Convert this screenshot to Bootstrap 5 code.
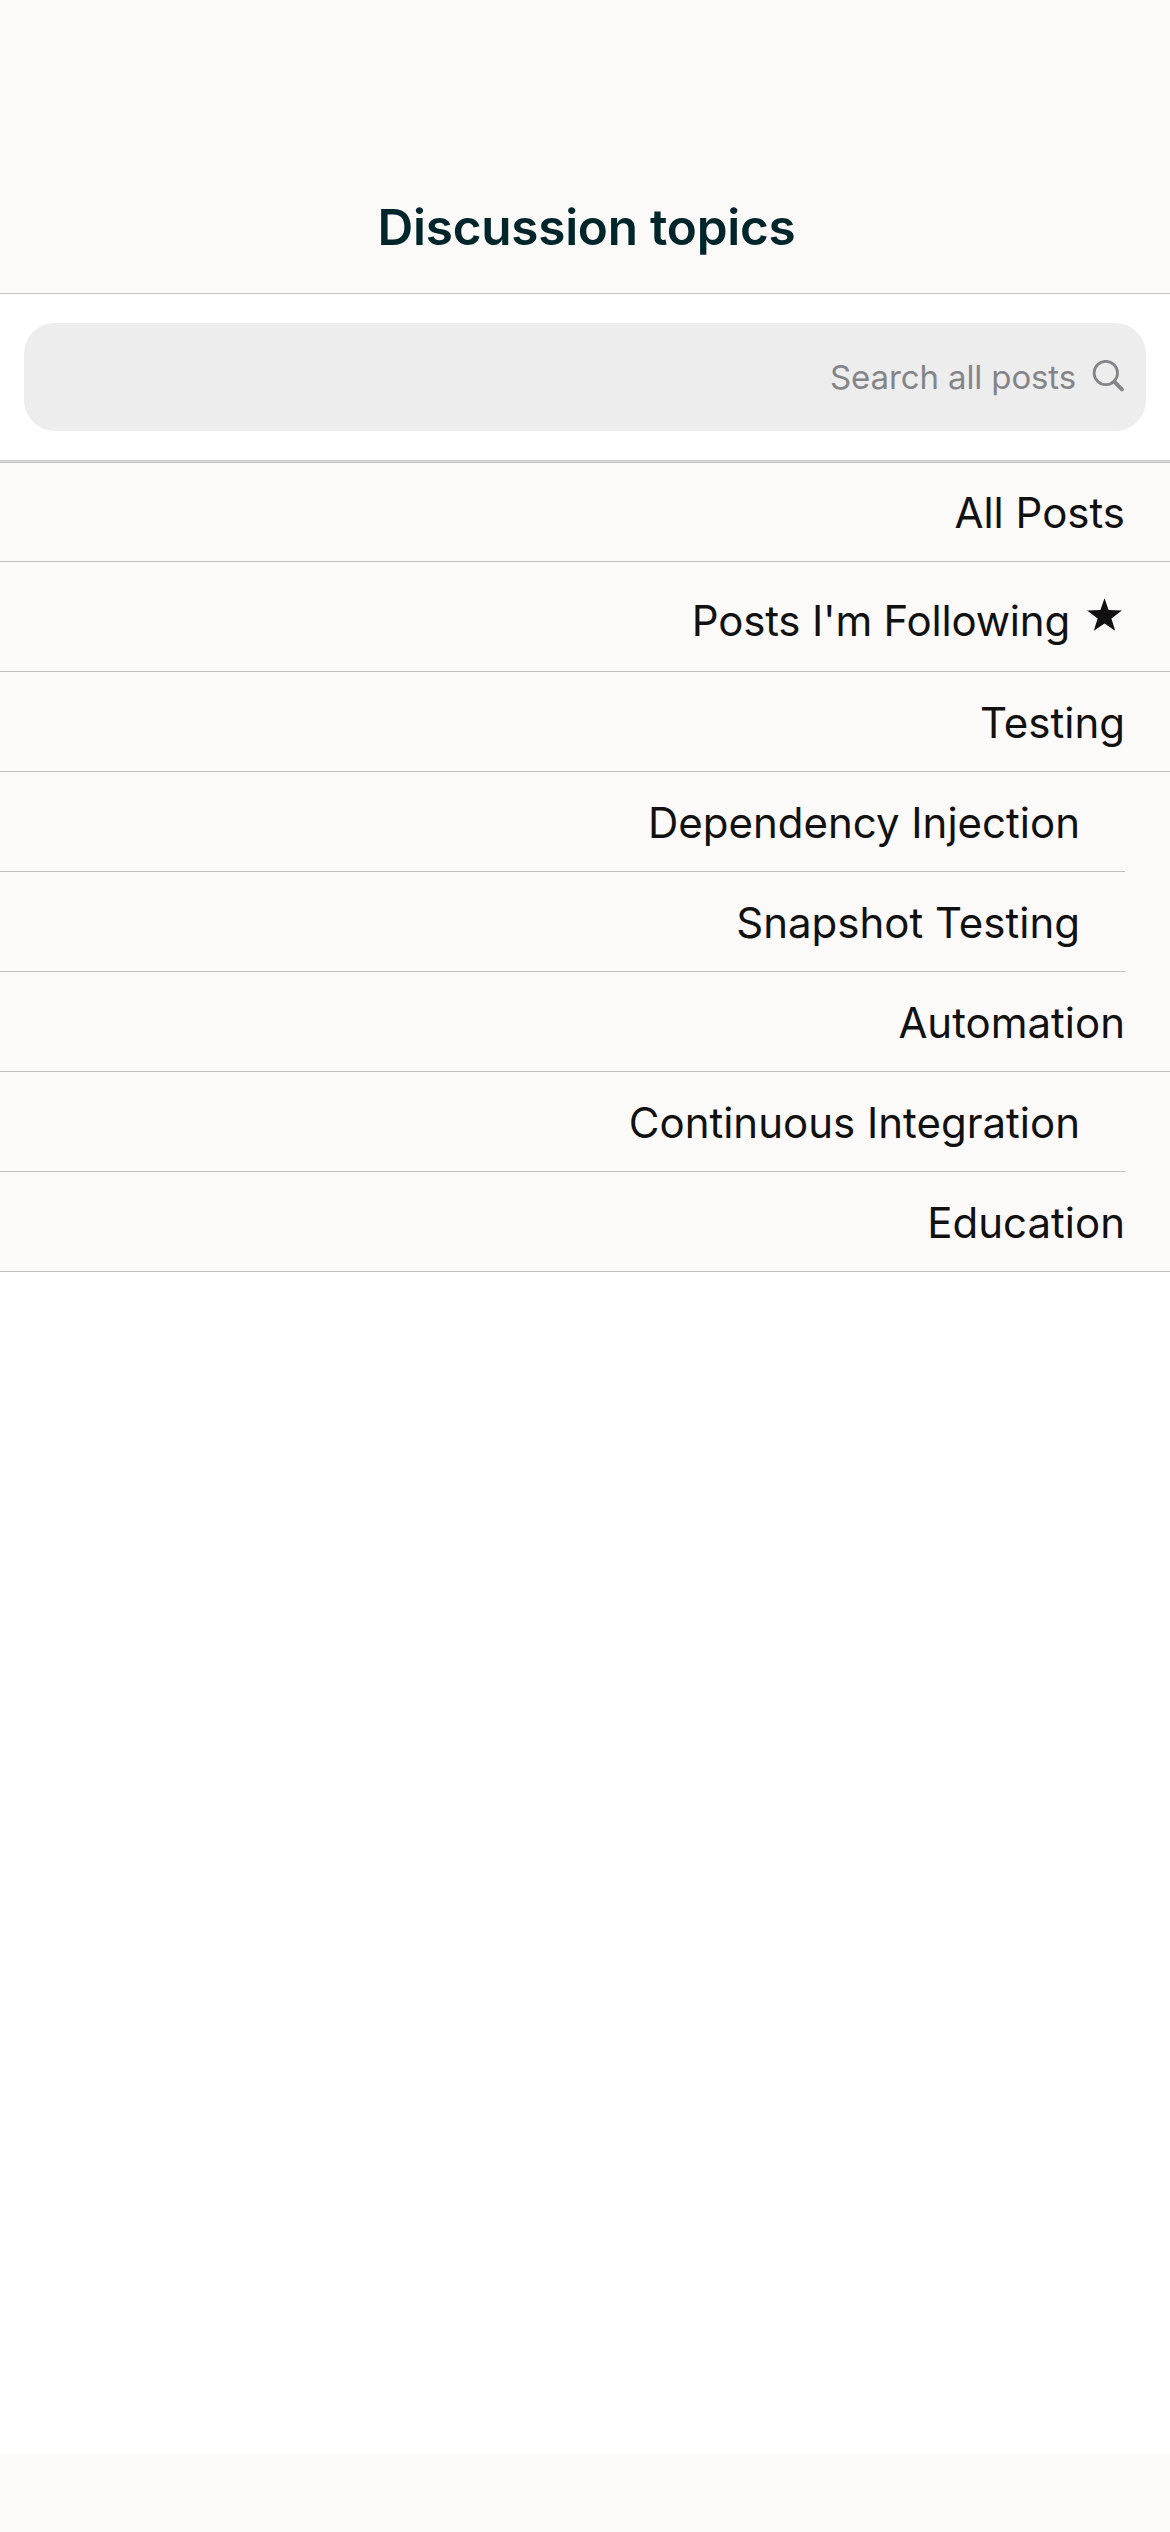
<!DOCTYPE html>
<html lang="en">
<head>
<meta charset="utf-8">
<meta name="viewport" content="width=device-width, initial-scale=1">
<title>Discussion topics</title>
<link href="https://cdn.jsdelivr.net/npm/bootstrap@5.3.0/dist/css/bootstrap.min.css" rel="stylesheet">
<style>
body{font-family:Inter,"Liberation Sans",sans-serif;background:#fff;color:#111}
.screen{height:2532px}
.topbar{height:294px;padding:0 0 36px 3px;background:#fcfaf9;border-bottom:1px solid #c4c4c5!important}
.topbar h1{font-size:49.5px;line-height:60px;font-weight:600;letter-spacing:-.25px;color:#00262b}
.search-area{height:167px;padding:29px 24px;border-bottom:1px solid #c6c6c8}
.search-box{height:108px;border-radius:31px;background:#ededed;color:#858589;padding-right:22px}
.search-box input{color:inherit;font-size:33px;line-height:40px;letter-spacing:-.12px;text-align:right;outline:0;min-width:0}
.search-box input::placeholder{color:#858589;opacity:1}
.topics{background:#fbfaf8;border-top:1px solid #e4e4e6}
.topics::before{content:"";display:block;height:1px;background:#bdbdbf}
.topic{padding:26px 45px 23px 0;font-size:42px;line-height:50px;border-bottom:1px solid #c0c0bf}
.topic-first{padding-top:25px}
.topic-followed{padding-top:34px;padding-bottom:25px;letter-spacing:-.2px}
.topic-inset{margin-right:45px;padding-right:45px}
.star{margin:2px 3px 0 17px}
.bottom-bar{height:78px;background:#fcfaf9}
</style>
<script src="https://cdn.jsdelivr.net/npm/bootstrap@5.3.0/dist/js/bootstrap.bundle.min.js"></script>
</head>
<body>
<div class="screen d-flex flex-column overflow-hidden">
  <header class="topbar d-flex align-items-end justify-content-center flex-shrink-0">
    <h1 class="m-0 text-nowrap">Discussion topics</h1>
  </header>
  <div class="search-area flex-shrink-0">
    <div class="search-box d-flex align-items-center">
      <input type="text" class="flex-grow-1 border-0 bg-transparent p-0" placeholder="Search all posts" aria-label="Search all posts">
      <svg class="flex-shrink-0 ms-3" width="32" height="34" viewBox="0 0 32 34" fill="none" stroke="#858589" aria-hidden="true"><circle cx="13.8" cy="13" r="11.7" stroke-width="2.8"/><path d="M22.3 21.7 29.9 29.4" stroke-width="3.8" stroke-linecap="round"/></svg>
    </div>
  </div>
  <main class="topics flex-shrink-0 text-end">
    <div class="topic topic-first">All Posts</div>
    <div class="topic topic-followed d-flex justify-content-end">
      <span>Posts I'm Following</span>
      <svg class="star flex-shrink-0" width="35" height="35" viewBox="0 0 35 35" fill="#111" aria-hidden="true"><path d="M17.5 0.2 21.6 12 34.9 12.4 24.4 20.4 28.2 32.8 17.5 25.4 6.8 32.8 10.6 20.4 .1 12.4 13.4 12Z"/></svg>
    </div>
    <div class="topic">Testing</div>
    <div class="topic topic-inset">Dependency Injection</div>
    <div class="topic topic-inset">Snapshot Testing</div>
    <div class="topic">Automation</div>
    <div class="topic topic-inset">Continuous Integration</div>
    <div class="topic">Education</div>
  </main>
  <footer class="bottom-bar mt-auto flex-shrink-0"></footer>
</div>
</body>
</html>
